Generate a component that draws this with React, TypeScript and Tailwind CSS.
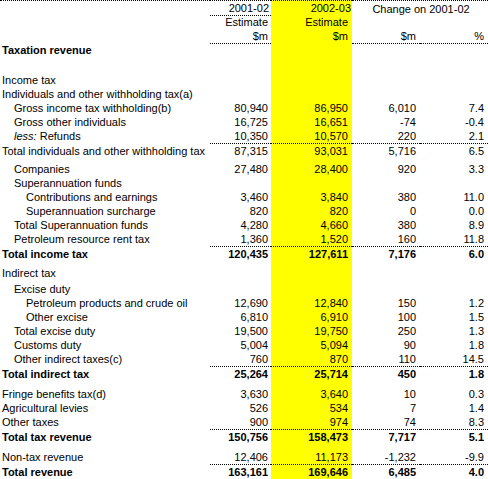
type Row = {
  label?: string;
  less?: boolean;
  indent?: number;
  vals?: string[];
  h: number;
  bold?: boolean;
  rule?: boolean;
  last?: boolean;
};

const heights: Record<number, string> = {
  14: "h-[14px]",
  15: "h-[15px]",
  16: "h-[16px]",
  19: "h-[19px]",
  20: "h-[20px]",
  21: "h-[21px]",
};

const indents = ["pl-[2px]", "pl-[14px]", "pl-[26px]"];

const rows: Row[] = [
  { label: "Taxation revenue", bold: true, h: 14 },
  { h: 16 },
  { label: "Income tax", h: 14 },
  { label: "Individuals and other withholding tax(a)", h: 14 },
  { label: "Gross income tax withholding(b)", indent: 1, vals: ["80,940", "86,950", "6,010", "7.4"], h: 14 },
  { label: "Gross other individuals", indent: 1, vals: ["16,725", "16,651", "-74", "-0.4"], h: 14 },
  { label: "Refunds", less: true, indent: 1, vals: ["10,350", "10,570", "220", "2.1"], h: 14 },
  { label: "Total individuals and other withholding tax", vals: ["87,315", "93,031", "5,716", "6.5"], h: 14, rule: true },
  { label: "Companies", indent: 1, vals: ["27,480", "28,400", "920", "3.3"], h: 19 },
  { label: "Superannuation funds", indent: 1, h: 14 },
  { label: "Contributions and earnings", indent: 2, vals: ["3,460", "3,840", "380", "11.0"], h: 14 },
  { label: "Superannuation surcharge", indent: 2, vals: ["820", "820", "0", "0.0"], h: 14 },
  { label: "Total Superannuation funds", indent: 1, vals: ["4,280", "4,660", "380", "8.9"], h: 14 },
  { label: "Petroleum resource rent tax", indent: 1, vals: ["1,360", "1,520", "160", "11.8"], h: 14 },
  { label: "Total income tax", bold: true, vals: ["120,435", "127,611", "7,176", "6.0"], h: 14, rule: true },
  { label: "Indirect tax", h: 20 },
  { label: "Excise duty", indent: 1, h: 16 },
  { label: "Petroleum products and crude oil", indent: 2, vals: ["12,690", "12,840", "150", "1.2"], h: 14 },
  { label: "Other excise", indent: 2, vals: ["6,810", "6,910", "100", "1.5"], h: 14 },
  { label: "Total excise duty", indent: 1, vals: ["19,500", "19,750", "250", "1.3"], h: 14 },
  { label: "Customs duty", indent: 1, vals: ["5,004", "5,094", "90", "1.8"], h: 14 },
  { label: "Other indirect taxes(c)", indent: 1, vals: ["760", "870", "110", "14.5"], h: 14 },
  { label: "Total indirect tax", bold: true, vals: ["25,264", "25,714", "450", "1.8"], h: 14, rule: true },
  { label: "Fringe benefits tax(d)", vals: ["3,630", "3,640", "10", "0.3"], h: 21 },
  { label: "Agricultural levies", vals: ["526", "534", "7", "1.4"], h: 14 },
  { label: "Other taxes", vals: ["900", "974", "74", "8.3"], h: 14 },
  { label: "Total tax revenue", bold: true, vals: ["150,756", "158,473", "7,717", "5.1"], h: 14, rule: true },
  { label: "Non-tax revenue", vals: ["12,406", "11,173", "-1,232", "-9.9"], h: 21 },
  { label: "Total revenue", bold: true, vals: ["163,161", "169,646", "6,485", "4.0"], h: 15, rule: true, last: true },
];

const grid = "grid grid-cols-[210px_61px_81px_68px_68px]";
const dot = "border-dotted border-black";

function Cell({ children, className = "" }: { children?: React.ReactNode; className?: string }) {
  return (
    <div className={`flex items-end overflow-visible whitespace-nowrap ${className}`}>
      <span className="leading-[14px]">{children}</span>
    </div>
  );
}

export default function App() {
  return (
    <div className="w-[488px] h-[479px] bg-white text-black text-[11px] font-['Liberation_Sans',Arial,sans-serif]">
      {/* header */}
      <div className={`${grid} h-[15px]`}>
        <Cell className={`border-t ${dot}`} />
        <Cell className={`border-t border-b ${dot} justify-end pr-[2px]`}>2001-02</Cell>
        <Cell className={`border-t border-b ${dot} justify-end pr-[1px] bg-[#ffff00]`}>2002-03</Cell>
        <div className={`col-span-2 border-t ${dot} flex items-end justify-center`}>
          <span className="leading-[14px] pl-[2px]">Change on 2001-02</span>
        </div>
      </div>
      <div className={`${grid} h-[14px]`}>
        <Cell />
        <Cell className="justify-end pr-[3px]">Estimate</Cell>
        <Cell className="justify-end pr-[4px] bg-[#ffff00]">Estimate</Cell>
        <Cell />
        <Cell />
      </div>
      <div className={`${grid} h-[14px]`}>
        <Cell />
        <Cell className={`border-b ${dot} justify-end pr-[3px]`}>$m</Cell>
        <Cell className={`border-b ${dot} justify-end pr-[4px] bg-[#ffff00]`}>$m</Cell>
        <Cell className={`border-b ${dot} justify-end pr-[4px]`}>$m</Cell>
        <Cell className={`border-b ${dot} justify-end pr-[4px]`}>%</Cell>
      </div>

      {rows.map((r, i) => {
        const t = r.rule ? `border-t ${dot}` : "";
        const b = r.last ? `border-b ${dot}` : "";
        const w = r.bold ? "font-bold" : "";
        const v = r.vals ?? ["", "", "", ""];
        return (
          <div key={i} className={`${grid} ${heights[r.h]}`}>
            <Cell className={`${b} ${w} ${indents[r.indent ?? 0]}`}>
              {r.less && <i>less:</i>}
              {r.less ? " " : ""}
              {r.label}
            </Cell>
            <Cell className={`${t} ${b} ${w} justify-end pr-[3px]`}>{v[0]}</Cell>
            <Cell className={`${t} ${b} ${w} justify-end pr-[4px] bg-[#ffff00]`}>{v[1]}</Cell>
            <Cell className={`${t} ${b} ${w} justify-end pr-[4px]`}>{v[2]}</Cell>
            <Cell className={`${t} ${b} ${w} justify-end pr-[4px]`}>{v[3]}</Cell>
          </div>
        );
      })}
    </div>
  );
}
